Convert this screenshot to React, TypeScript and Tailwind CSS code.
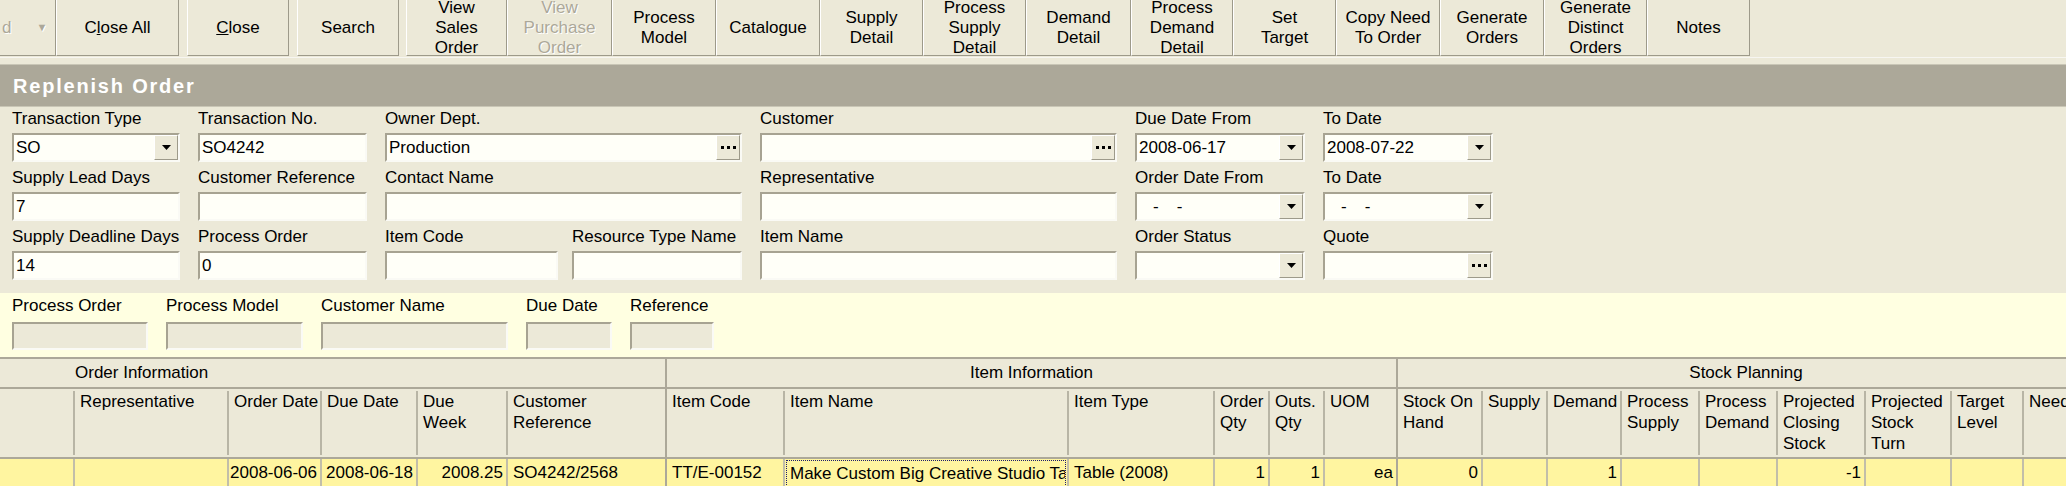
import React from "react";

type Col = { w: string; head: string; data?: string; right?: boolean; focus?: boolean; group?: boolean };

const cols: Col[] = [
  { w: "w-[75px]", head: "" },
  { w: "w-[154px]", head: "Representative" },
  { w: "w-[93px]", head: "Order Date", data: "2008-06-06", right: true },
  { w: "w-[96px]", head: "Due Date", data: "2008-06-18", right: true },
  { w: "w-[90px]", head: "Due\nWeek", data: "2008.25", right: true },
  { w: "w-[159px]", head: "Customer\nReference", data: "SO4242/2568", group: true },
  { w: "w-[118px]", head: "Item Code", data: "TT/E-00152" },
  { w: "w-[284px]", head: "Item Name", data: "Make Custom Big Creative Studio Table", focus: true },
  { w: "w-[146px]", head: "Item Type", data: "Table (2008)" },
  { w: "w-[55px]", head: "Order\nQty", data: "1", right: true },
  { w: "w-[55px]", head: "Outs.\nQty", data: "1", right: true },
  { w: "w-[73px]", head: "UOM", data: "ea", right: true, group: true },
  { w: "w-[85px]", head: "Stock On\nHand", data: "0", right: true },
  { w: "w-[65px]", head: "Supply" },
  { w: "w-[74px]", head: "Demand", data: "1", right: true },
  { w: "w-[78px]", head: "Process\nSupply" },
  { w: "w-[78px]", head: "Process\nDemand" },
  { w: "w-[88px]", head: "Projected\nClosing\nStock", data: "-1", right: true },
  { w: "w-[86px]", head: "Projected\nStock\nTurn" },
  { w: "w-[72px]", head: "Target\nLevel" },
  { w: "w-[120px]", head: "Need" },
];

const toolButtons = [
  { w: "w-[101px]", label: "View\nSales\nOrder" },
  { w: "w-[105px]", label: "View\nPurchase\nOrder", disabled: true },
  { w: "w-[104px]", label: "Process\nModel" },
  { w: "w-[104px]", label: "Catalogue" },
  { w: "w-[103px]", label: "Supply\nDetail" },
  { w: "w-[103px]", label: "Process\nSupply\nDetail" },
  { w: "w-[105px]", label: "Demand\nDetail" },
  { w: "w-[102px]", label: "Process\nDemand\nDetail" },
  { w: "w-[103px]", label: "Set\nTarget" },
  { w: "w-[104px]", label: "Copy Need\nTo Order" },
  { w: "w-[104px]", label: "Generate\nOrders" },
  { w: "w-[103px]", label: "Generate\nDistinct\nOrders" },
  { w: "w-[103px]", label: "Notes" },
];

function ToolButton({ w, children, disabled }: { w: string; children: React.ReactNode; disabled?: boolean }) {
  return (
    <div
      className={`${w} flex h-[56px] shrink-0 items-center justify-center overflow-hidden whitespace-pre-line border-l border-b border-r border-l-white border-b-[#9d9a8a] border-r-[#9d9a8a] text-center leading-[20px] ${
        disabled ? "text-[#aca899] [text-shadow:1px_1px_0_#fff]" : "text-black"
      }`}
    >
      {children}
    </div>
  );
}

function Arrow() {
  return (
    <svg width="9" height="5" viewBox="0 0 9 5">
      <path d="M0 0h9L4.5 5z" fill="#000" />
    </svg>
  );
}

function SideButton({ kind }: { kind: "drop" | "dots" }) {
  return (
    <div className="flex h-full w-[24px] shrink-0 items-center justify-center border-l border-t border-r border-b border-l-white border-t-white border-r-[#9d9a8a] border-b-[#9d9a8a] bg-[#ece9d8]">
      {kind === "drop" ? (
        <Arrow />
      ) : (
        <div className="flex gap-[3px]">
          <span className="h-[3px] w-[3px] bg-black"></span>
          <span className="h-[3px] w-[3px] bg-black"></span>
          <span className="h-[3px] w-[3px] bg-black"></span>
        </div>
      )}
    </div>
  );
}

function Field({
  label,
  value,
  side,
  mask,
}: {
  label: string;
  value?: string;
  side?: "drop" | "dots";
  mask?: boolean;
}) {
  return (
    <div className="flex flex-col">
      <div className="h-[20px] whitespace-nowrap leading-[20px]">{label}</div>
      <div className="mt-[4px] flex h-[29px] items-center border-2 border-t-[#a7a392] border-l-[#a7a392] border-b-[#fafaf5] border-r-[#fafaf5] bg-[#fffff8]">
        <div className="flex-1 overflow-hidden whitespace-nowrap pl-[2px] leading-[20px]">
          {mask ? (
            <span>
              <span className="ml-[14px]">-</span>
              <span className="ml-[18px]">-</span>
            </span>
          ) : (
            value
          )}
        </div>
        {side && <SideButton kind={side} />}
      </div>
    </div>
  );
}

function PanelField({ label }: { label: string }) {
  return (
    <div className="flex flex-col">
      <div className="h-[20px] whitespace-nowrap leading-[20px]">{label}</div>
      <div className="mt-[6px] h-[28px] border-2 border-t-[#a7a392] border-l-[#a7a392] border-b-[#fafaf5] border-r-[#fafaf5] bg-[#ece9d8]"></div>
    </div>
  );
}

export default function App() {
  return (
    <div className="h-[486px] w-[2066px] overflow-hidden bg-[#ece9d8] font-['Liberation_Sans',Arial,sans-serif] text-[17px] text-black">
      {/* Toolbar */}
      <div className="h-[64px]">
        <div className="flex h-[58px] border-b border-[#f7f6f1]">
          <div className="flex">
            <div className="flex h-[56px] w-[56px] items-center border-b border-r border-b-[#9d9a8a] border-r-[#9d9a8a] text-[#aca899] [text-shadow:1px_1px_0_#fff]">
              <span className="pl-[2px] leading-[20px]">d</span>
              <span className="ml-[25px] text-[11px]">▼</span>
            </div>
            <ToolButton w="w-[123px]">
              <span>
                C<span className="underline">l</span>ose All
              </span>
            </ToolButton>
          </div>
          <div className="ml-[8px] flex">
            <ToolButton w="w-[102px]">
              <span>
                <span className="underline">C</span>lose
              </span>
            </ToolButton>
          </div>
          <div className="ml-[8px] flex">
            <ToolButton w="w-[102px]">Search</ToolButton>
          </div>
          <div className="ml-[7px] flex">
            {toolButtons.map((b) => (
              <ToolButton key={b.label} w={b.w} disabled={b.disabled}>
                {b.label}
              </ToolButton>
            ))}
          </div>
        </div>
      </div>

      {/* Title */}
      <div className="flex h-[43px] items-center border-y border-[#c9c6b6] bg-[#aca899] pl-[13px] text-[20px] font-bold tracking-[1.8px] text-white">
        Replenish Order
      </div>

      {/* Search form */}
      <div className="grid grid-cols-[168px_169px_357px_357px_170px_170px] gap-x-[18px] gap-y-[6px] pl-[12px] pt-[2px]">
        <Field label="Transaction Type" value="SO" side="drop" />
        <Field label="Transaction No." value="SO4242" />
        <Field label="Owner Dept." value="Production" side="dots" />
        <Field label="Customer" side="dots" />
        <Field label="Due Date From" value="2008-06-17" side="drop" />
        <Field label="To Date" value="2008-07-22" side="drop" />

        <Field label="Supply Lead Days" value="7" />
        <Field label="Customer Reference" />
        <Field label="Contact Name" />
        <Field label="Representative" />
        <Field label="Order Date From" mask side="drop" />
        <Field label="To Date" mask side="drop" />

        <Field label="Supply Deadline Days" value="14" />
        <Field label="Process Order" value="0" />
        <div className="grid grid-cols-[173px_170px] gap-x-[14px]">
          <Field label="Item Code" />
          <Field label="Resource Type Name" />
        </div>
        <Field label="Item Name" />
        <Field label="Order Status" side="drop" />
        <Field label="Quote" side="dots" />
      </div>

      {/* Selected order panel */}
      <div className="mt-[13px] h-[64px] bg-[#ffffe1] pl-[12px] pt-[3px]">
        <div className="grid grid-cols-[136px_137px_187px_86px_84px] gap-x-[18px]">
          <PanelField label="Process Order" />
          <PanelField label="Process Model" />
          <PanelField label="Customer Name" />
          <PanelField label="Due Date" />
          <PanelField label="Reference" />
        </div>
      </div>

      {/* Grid */}
      <div className="border-t-2 border-[#aca899]">
        <div className="flex h-[28px] items-center">
          <div className="flex h-full w-[667px] shrink-0 items-center border-r-2 border-[#aca899] pl-[75px] leading-[20px]">
            Order Information
          </div>
          <div className="flex h-full w-[731px] shrink-0 items-center justify-center border-r-2 border-[#aca899] leading-[20px]">
            Item Information
          </div>
          <div className="flex h-full w-[696px] shrink-0 items-center justify-center leading-[20px]">
            Stock Planning
          </div>
        </div>
        <div className="flex h-[70px] border-t-2 border-[#aca899]">
          {cols.map((c, i) =>
            c.group ? (
              <div key={i} className={`${c.w} h-full shrink-0 border-r-2 border-[#aca899] pl-[5px] pt-[2px]`}>
                <div className="whitespace-pre-line leading-[21px]">{c.head}</div>
              </div>
            ) : (
              <div key={i} className={`${c.w} h-full shrink-0 pb-[2px] pt-[2px]`}>
                <div className="h-full whitespace-pre-line border-r-2 border-[#b8b5a5] pl-[5px] leading-[21px]">
                  {c.head}
                </div>
              </div>
            )
          )}
        </div>
        <div className="flex h-[31px] border-t-2 border-[#aca899] bg-[#fff5a0]">
          {cols.map((c, i) => (
            <div
              key={i}
              className={`${c.w} h-full shrink-0 overflow-hidden border-r-2 ${
                c.group ? "border-[#aca899]" : "border-[#c2bea9]"
              } ${c.focus ? "p-[1px]" : ""}`}
            >
              {c.focus ? (
                <div className="h-full overflow-hidden whitespace-nowrap border border-dotted border-[#1c1c6c] pl-[3px] pt-[3px] leading-[20px]">
                  {c.data}
                </div>
              ) : (
                <div
                  className={`flex h-full whitespace-nowrap pt-[4px] leading-[20px] ${
                    c.right ? "justify-end pr-[3px]" : "pl-[5px]"
                  }`}
                >
                  {c.data}
                </div>
              )}
            </div>
          ))}
        </div>
      </div>
    </div>
  );
}
